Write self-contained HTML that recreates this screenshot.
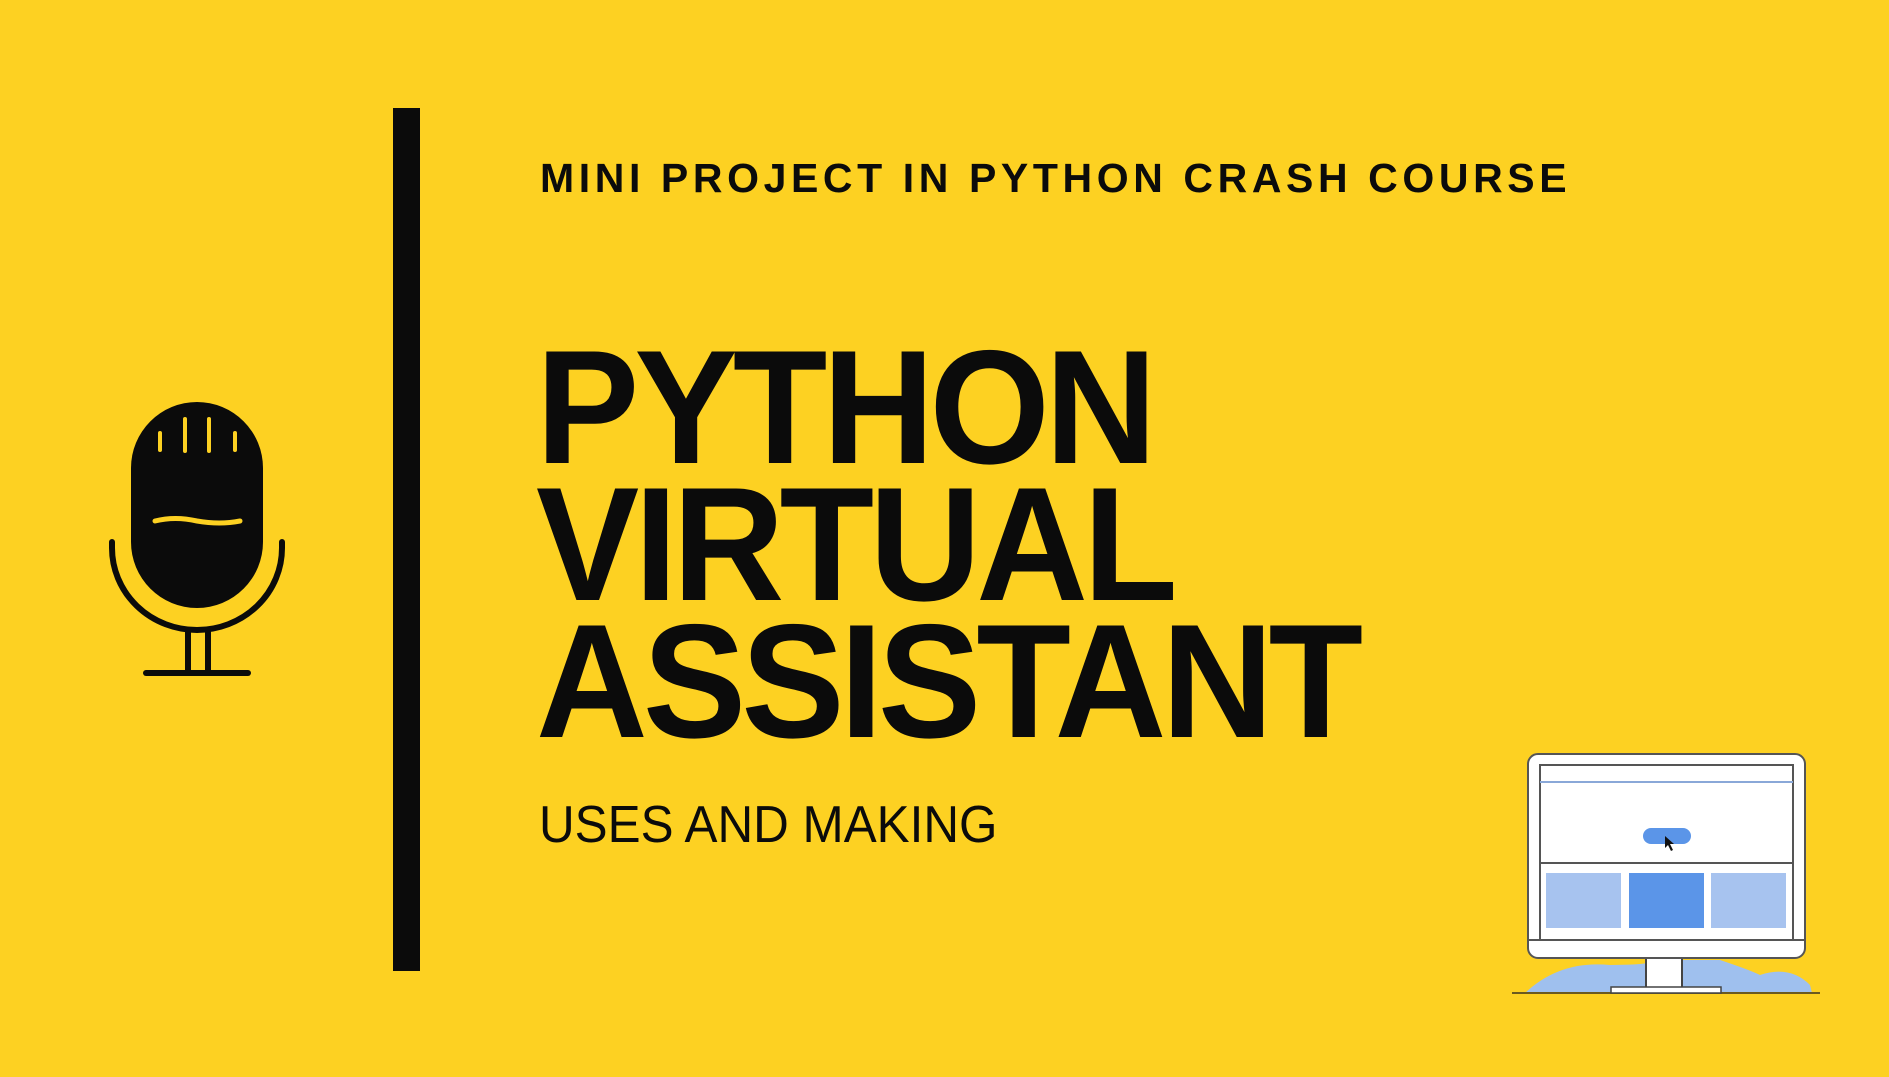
<!DOCTYPE html><html><head><style>
body{margin:0;width:1889px;height:1077px;background:#fdd122;overflow:hidden;position:relative;font-family:"Liberation Sans",sans-serif;color:#0b0b0b}
.t{position:absolute;white-space:nowrap;font-weight:bold}
</style></head><body>
<div style="position:absolute;left:393px;top:108px;width:27px;height:863px;background:#0b0b0b"></div>
<div class="t" style="left:540px;top:155px;font-size:41px;letter-spacing:4.6px">MINI PROJECT IN PYTHON CRASH COURSE</div>
<div class="t" style="left:536px;top:339px;font-size:162px;line-height:137px;letter-spacing:-5px;transform:scaleX(0.955);transform-origin:left">PYTHON<br>VIRTUAL<br>ASSISTANT</div>
<div class="t" style="left:539px;top:795px;font-size:52px;font-weight:normal;transform:scaleX(0.95);transform-origin:left">USES AND MAKING</div>
<svg style="position:absolute;left:0;top:0" width="1889" height="1077">
<rect x="131" y="402" width="132" height="206" rx="66" fill="#0b0b0b"/>
<g stroke="#fdd122" stroke-width="4" stroke-linecap="round">
<line x1="160" y1="433" x2="160" y2="450"/><line x1="185" y1="419" x2="185" y2="451"/><line x1="209" y1="419" x2="209" y2="451"/><line x1="235" y1="433" x2="235" y2="450"/>
<path d="M155 521 Q175 516 197 521 Q220 525 240 521" fill="none" stroke-width="5"/></g>
<g stroke="#0b0b0b" stroke-width="6" stroke-linecap="round" fill="none">
<path d="M112 542 L112 548 A85 82 0 0 0 282 548 L282 542"/>
<line x1="188" y1="630" x2="188" y2="672"/><line x1="208" y1="630" x2="208" y2="672"/>
<line x1="146" y1="673" x2="248" y2="673"/></g>
<path d="M1525 993 Q1560 960 1610 965 Q1650 965 1660 960 L1720 960 Q1750 970 1760 975 Q1790 965 1810 985 L1812 993Z" fill="#9fc0ee"/>
<line x1="1512" y1="993" x2="1820" y2="993" stroke="#6b5a20" stroke-width="2"/>
<rect x="1646" y="958" width="36" height="30" fill="#fff" stroke="#444" stroke-width="2"/>
<rect x="1611" y="987" width="110" height="6" fill="#fff" stroke="#444" stroke-width="1.5"/>
<rect x="1528" y="754" width="277" height="204" rx="10" fill="#fff" stroke="#555" stroke-width="2"/>
<rect x="1540" y="765" width="253" height="175" fill="#fff" stroke="#555" stroke-width="2"/>
<line x1="1540" y1="782" x2="1793" y2="782" stroke="#8aa8d8" stroke-width="2"/>
<line x1="1540" y1="863" x2="1793" y2="863" stroke="#555" stroke-width="2"/>
<line x1="1528" y1="940" x2="1805" y2="940" stroke="#555" stroke-width="2"/>
<rect x="1643" y="828" width="48" height="16" rx="8" fill="#5b95e8"/>
<path d="M1665 836 L1665 848 L1668 845 L1671 851 L1673 850 L1670 844 L1674 844Z" fill="#111"/>
<rect x="1546" y="873" width="75" height="55" fill="#a7c3ef"/>
<rect x="1629" y="873" width="75" height="55" fill="#5b95e8"/>
<rect x="1711" y="873" width="75" height="55" fill="#a7c3ef"/>
</svg>
</body></html>
